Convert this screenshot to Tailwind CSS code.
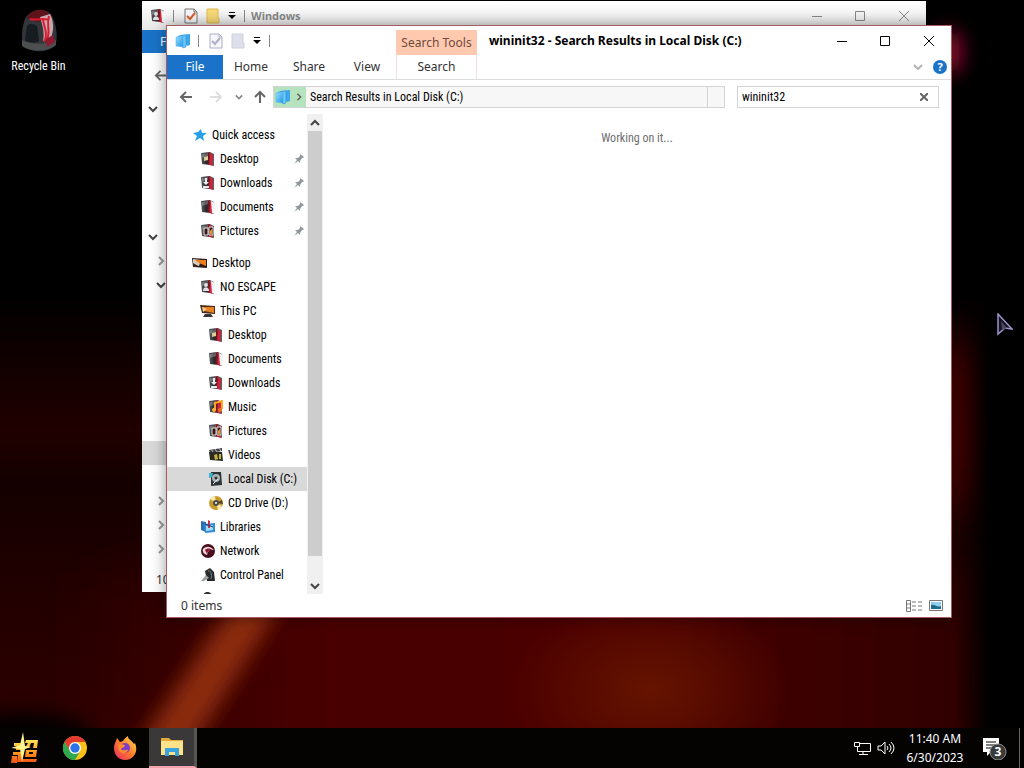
<!DOCTYPE html>
<html lang="en">
<head>
  <meta charset="utf-8">
  <meta name="viewport" content="width=device-width, initial-scale=1">
  <title>wininit32 - Search Results in Local Disk (C:)</title>
  <script src="https://cdn.jsdelivr.net/npm/@tailwindcss/browser@4"></script>
</head>
<body class="relative h-screen overflow-hidden bg-black font-['Roboto_Condensed','Lato',sans-serif] text-[12px] leading-4 text-black">

  <!-- icon sprite -->
  <svg class="absolute size-0" aria-hidden="true">
    <defs>
      <linearGradient id="gold" x1="0" y1="0" x2="0" y2="1"><stop offset="0" stop-color="#ffe45a"/><stop offset=".5" stop-color="#ff9d1e"/><stop offset="1" stop-color="#f2501a"/></linearGradient>
      <linearGradient id="fox" x1="1" y1="0" x2="0" y2="1"><stop offset="0" stop-color="#ffe14a"/><stop offset=".5" stop-color="#ff7a2b"/><stop offset="1" stop-color="#e8246e"/></linearGradient>
      <linearGradient id="blues" x1="0" y1="0" x2="1" y2="1"><stop offset="0" stop-color="#9be0ff"/><stop offset="1" stop-color="#2196e8"/></linearGradient>
      <linearGradient id="shell" x1="0" y1="0" x2="1" y2="0"><stop offset="0" stop-color="#5b5f63"/><stop offset=".6" stop-color="#25282b"/><stop offset="1" stop-color="#8f1420"/></linearGradient>
    </defs>
    <symbol id="box" viewBox="0 0 16 16">
      <path d="M1 2l9-1v13l-8-1z" fill="url(#shell)"/>
      <path d="M10 1l4 2v12l-4-1z" fill="#5a5d60"/>
      <path d="M9 2c3 3-1 6 1 12l3 1c-2-5 2-8-1-12z" fill="#d2233c"/>
      <path d="M2 3l6-1v3l-6 2z" fill="#fff" opacity=".25"/>
    </symbol>
    <symbol id="desk" viewBox="0 0 16 16"><use href="#box"/><path d="M4 6l4-1v4l-4 1z" fill="#d8cf9a"/></symbol>
    <symbol id="down" viewBox="0 0 16 16"><use href="#box"/><path d="M5 3h2v4h2L6 10 3 7h2zM3 11h6v2H3z" fill="#e6eef2"/></symbol>
    <symbol id="docs" viewBox="0 0 16 16"><use href="#box"/><path d="M11 2l4 2v11l-3-1z" fill="#f4f4f4"/></symbol>
    <symbol id="pics" viewBox="0 0 16 16"><use href="#box"/><path d="M4 5h4v7H4zM9 4h4v8H9z" fill="#33141a" stroke="#f0e6dc"/><path d="M10 8l2-2v5h-2z" fill="#e89a28"/></symbol>
    <symbol id="user" viewBox="0 0 16 16"><use href="#docs"/><circle cx="6" cy="6" r="2" fill="#dfe3e6"/><path d="M3 12c0-5 6-5 6 0z" fill="#dfe3e6"/></symbol>
    <symbol id="music" viewBox="0 0 16 16"><use href="#box"/><path d="M7 11V4l7-2v8" fill="none" stroke="#ffa51f" stroke-width="2"/><circle cx="6" cy="11" r="2" fill="#ffb52e"/><circle cx="12" cy="11" r="2" fill="#e8701c"/></symbol>
    <symbol id="video" viewBox="0 0 16 16"><path d="M1 3l13-2v3L2 6z" fill="#444"/><path d="M1 5h13l1 9-13-1z" fill="#292b24"/><path d="M3 2l2 3M7 2l2 3M11 1l2 3" stroke="#bbb"/><path d="M6 8l3-1 1 5-3 1zM11 7h2v5h-2z" fill="#c6b43c"/></symbol>
    <symbol id="monitor" viewBox="0 0 16 16"><path d="M0 3l15 1v9L1 12z" fill="#2a1a14"/><path d="M1 4l8 1-2 6-6-1z" fill="#d8cdbb"/><path d="M3 5l11 0v6L7 8z" fill="#ef7d1c"/><path d="M1 8l7 4H1z" fill="#3c2a22"/></symbol>
    <symbol id="pc" viewBox="0 0 16 16"><path d="M0 2l15 1v8L2 10z" fill="#4a2a18"/><path d="M2 4l12 0v6L4 8z" fill="#e8811f"/><path d="M2 4l5 2-4 3z" fill="#f9cf93"/><path d="M5 11h6l2 3H3z" fill="#343434"/></symbol>
    <symbol id="disk" viewBox="0 0 16 16"><path d="M3 1h10l1 13-11 1z" fill="#2e3436"/><circle cx="8" cy="7" r="4" fill="#aab4b8"/><circle cx="8" cy="7" r="1.5" fill="#2e3436"/><path d="M1 2h4l-1 4-3 1z" fill="#36b4d8"/><path d="M5 13l5-5" stroke="#eee"/></symbol>
    <symbol id="cd" viewBox="0 0 16 16"><circle cx="8" cy="8" r="7" fill="#c89a2c"/><path d="M8 8L2 4a7 7 0 0 1 5-3zM8 8l6 3a7 7 0 0 1-4 4z" fill="#f9ecae"/><path d="M8 8l6-3 1 4z" fill="#5a4a20"/><circle cx="8" cy="8" r="3" fill="#4d4a48"/><circle cx="8" cy="8" r="1" fill="#fff"/></symbol>
    <symbol id="lib" viewBox="0 0 16 16"><path d="M1 2l5 1v10l-5-2z" fill="#2b6fb4"/><path d="M4 5l11-1v9L5 14z" fill="#2f8ede"/><path d="M6 7l7-1v5l-7 1z" fill="#a7dbff"/><path d="M8 1l2 1v7H8z" fill="#c2334c"/><path d="M5 5l8 3" stroke="#253a66"/></symbol>
    <symbol id="net" viewBox="0 0 16 16"><circle cx="8" cy="8" r="7" fill="#48101e"/><path d="M3 6c4-4 8-2 11 1-4-1-6 0-7 5-3-1-5-3-4-6z" fill="#f0d8dc"/><path d="M5 7c2-2 5-2 7 0-4 0-4 2-5 4z" fill="#8e1730"/></symbol>
    <symbol id="panel" viewBox="0 0 16 16"><path d="M5 4l5-3 4 4 1 9H7z" fill="#26292a"/><path d="M8 4c3-1 4 3 3 8" stroke="#7c8284" fill="none"/><path d="M1 14l5-6 3 3-5 3z" fill="#9da1a2"/></symbol>
    <symbol id="star" viewBox="0 0 16 16"><path d="M9 2l1 4 5 0-4 3 1 5-4-3-5 3 2-5-4-3 5-1z" fill="#27a0ea"/></symbol>
    <symbol id="pin" viewBox="0 0 12 12"><path d="M7 1l4 3-1 1-1 0-2 3 0 2-2-2-4 3 3-4-2-2 3 0 2-2z" fill="#8d989d"/></symbol>
    <symbol id="stack" viewBox="0 0 16 16"><path d="M5 2l10-1v11l-3 1z" fill="#3ea6ea"/><path d="M3 3l8-1v12l-3 1z" fill="#6cc6f7" stroke="#2789cf" stroke-width=".5"/><path d="M1 4l7-1v11l-7-1z" fill="url(#blues)" stroke="#48aee8" stroke-width=".5"/></symbol>
    <symbol id="chev-d" viewBox="0 0 10 10"><path d="M1 3l4 4 4-4" fill="none" stroke="currentColor" stroke-width="2"/></symbol>
    <symbol id="chev-r" viewBox="0 0 10 10"><path d="M3 1l4 4-4 4" fill="none" stroke="currentColor" stroke-width="2"/></symbol>
    <symbol id="arrow-l" viewBox="0 0 14 14"><path d="M13 7H2M7 2L2 7l5 5" fill="none" stroke="currentColor" stroke-width="2"/></symbol>
    <symbol id="overflow" viewBox="0 0 8 8"><path d="M1 0h6v1H1zM0 3h8L4 7z" fill="currentColor"/></symbol>
    <symbol id="page" viewBox="0 0 14 16"><path d="M1 1h9l3 3v11H1z" fill="#f7f6fa" stroke="currentColor"/><path d="M10 1v3h3" fill="none" stroke="currentColor"/></symbol>
  </svg>

  <!-- wallpaper -->
  <svg class="absolute inset-0 size-full" viewBox="0 0 1024 768" preserveAspectRatio="none" aria-hidden="true">
    <defs>
      <linearGradient id="fade" x1="0" y1="0" x2="0" y2="1"><stop offset=".38" stop-color="#000"/><stop offset=".5" stop-color="#160000"/><stop offset=".56" stop-color="#200000"/><stop offset=".63" stop-color="#140000"/><stop offset=".8" stop-color="#240000"/><stop offset="1" stop-color="#300000"/></linearGradient>
      <linearGradient id="floor" x1="0" y1="0" x2="1" y2="0"><stop offset="0" stop-color="#480000" stop-opacity="0"/><stop offset=".28" stop-color="#480000"/><stop offset=".6" stop-color="#4c0500"/><stop offset="1" stop-color="#2e0000"/></linearGradient>
      <linearGradient id="edge" x1="0" y1="0" x2="1" y2="0"><stop offset="0" stop-color="#000" stop-opacity="0"/><stop offset=".5" stop-color="#000"/></linearGradient>
      <radialGradient id="ember"><stop offset="0" stop-color="#661400"/><stop offset="1" stop-color="#661400" stop-opacity="0"/></radialGradient>
      <filter id="soft" x="-100%" y="-100%" width="300%" height="300%"><feGaussianBlur stdDeviation="10"/></filter>
      <filter id="softer" x="-100%" y="-100%" width="300%" height="300%"><feGaussianBlur stdDeviation="24"/></filter>
    </defs>
    <rect width="1024" height="768" fill="url(#fade)"/>
    <rect x="60" y="570" width="920" height="260" fill="url(#floor)" filter="url(#softer)"/>
    <rect x="940" y="340" width="45" height="170" fill="#580000" filter="url(#softer)"/>
    <ellipse cx="650" cy="690" rx="140" ry="100" fill="url(#ember)"/>
    <path d="M135 750L235 600h50L190 750z" fill="#8a2a0c" filter="url(#soft)"/>
    <ellipse cx="20" cy="735" rx="70" ry="22" fill="#000" filter="url(#soft)"/>
    <rect x="955" width="69" height="768" fill="url(#edge)"/>
    <rect x="935" y="32" width="24" height="40" rx="8" fill="#c00840" filter="url(#soft)"/>
  </svg>

  <!-- desktop shortcut -->
  <a href="#" class="absolute left-0 top-[6px] flex w-[77px] flex-col items-center gap-1 text-white">
    <svg class="size-12" viewBox="0 0 48 48">
      <path d="M9 16C12 2 34 0 38 12c4 10 5 22 2 28-8 7-24 7-32 0-2-8-1-17 1-24z" fill="#32353a"/>
      <path d="M12 12C16 2 32 0 37 12L22 16z" fill="#5e1219"/>
      <path d="M25 11l10-3c4 8 4 16 1 24l-8 3c2-9-1-17-3-24z" fill="#c8a8ae"/>
      <path d="M15 13c8 2 14-2 19 1M28 12c0 9 6 14 1 24M34 10c-3 10 2 16-2 23" stroke="#d81c30" stroke-width="2" fill="none"/>
      <path d="M12 20c2-3 7-2 10 0l2 15c-4 3-10 2-14-1z" fill="#161c20"/>
      <path d="M7 34c9 5 25 5 34 0v5c-8 7-26 7-34 1z" fill="#4c4e50"/>
      <path d="M31 33l7-4 2 7-8 5z" fill="#8e1a30"/>
    </svg>
    <span>Recycle Bin</span>
  </a>

  <!-- background window -->
  <section class="absolute bottom-[176px] left-[142px] right-[98px] top-px flex flex-col overflow-hidden bg-white" aria-label="Windows">
    <header class="flex h-[29px] shrink-0 items-center bg-linear-to-b from-white to-[#e8e8e8] pl-2 text-[#888]">
      <svg class="size-4"><use href="#user"/></svg>
      <span class="ml-[7px] h-3 w-px bg-[#888]"></span>
      <svg class="ml-[10px] h-4 w-[14px] text-[#777]" viewBox="0 0 14 16"><use href="#page"/><path d="M3 8l3 3 5-6" fill="none" stroke="#d8602a" stroke-width="2"/></svg>
      <svg class="ml-2 h-4 w-[14px]" viewBox="0 0 14 16"><path d="M1 1h11v9h1v5H1z" fill="#f8d976" stroke="#dfbb50"/></svg>
      <svg class="ml-2 size-2 text-black"><use href="#overflow"/></svg>
      <span class="ml-2 h-3 w-px bg-[#888]"></span>
      <h2 class="ml-[6px] font-['Noto_Sans',sans-serif] text-[11px] font-bold">Windows</h2>
      <div class="ml-auto flex">
        <button class="grid w-[43px] place-items-center" aria-label="Minimize"><svg class="size-[10px]" viewBox="0 0 10 10"><path d="M0 5.500h10" stroke="#888"/></svg></button>
        <button class="grid w-[43px] place-items-center" aria-label="Maximize"><svg class="size-[10px]" viewBox="0 0 10 10"><path d="M.5.500h9v9h-9z" fill="none" stroke="#888"/></svg></button>
        <button class="grid w-[45px] place-items-center" aria-label="Close"><svg class="size-[10px]" viewBox="0 0 10 10"><path d="M0 0l10 10M10 0L0 10" stroke="#888"/></svg></button>
      </div>
    </header>
    <button class="h-[23px] w-14 shrink-0 bg-[#1a73c8] pl-[18px] text-left font-['Noto_Sans',sans-serif] text-[12px] text-white">File</button>
    <div class="flex h-[44px] shrink-0 items-center pl-3 text-[#666]"><svg class="size-[13px]"><use href="#arrow-l"/></svg></div>
    <ul class="flex-1 text-[#444]">
      <li class="flex h-6 items-center pl-[6px]"><svg class="size-[10px]"><use href="#chev-d"/></svg></li>
      <li class="mt-[104px] flex h-6 items-center pl-[6px]"><svg class="size-[10px]"><use href="#chev-d"/></svg></li>
      <li class="flex h-6 items-center pl-[14px] text-[#999]"><svg class="size-[10px]"><use href="#chev-r"/></svg></li>
      <li class="flex h-6 items-center pl-[14px]"><svg class="size-[10px]"><use href="#chev-d"/></svg></li>
      <li class="mt-36 h-6 w-[165px] bg-[#d9d9d9]"></li>
      <li class="mt-6 flex h-6 items-center pl-[14px] text-[#999]"><svg class="size-[10px]"><use href="#chev-r"/></svg></li>
      <li class="flex h-6 items-center pl-[14px] text-[#999]"><svg class="size-[10px]"><use href="#chev-r"/></svg></li>
      <li class="flex h-6 items-center pl-[14px] text-[#999]"><svg class="size-[10px]"><use href="#chev-r"/></svg></li>
    </ul>
    <footer class="flex h-6 shrink-0 items-center pl-[14px] font-['Noto_Sans',sans-serif] text-[12px] text-[#333]">105 items</footer>
  </section>

  <!-- search results window -->
  <main class="absolute bottom-[150px] left-[166px] right-[72px] top-[25px] flex flex-col border border-[#a85a62] bg-white shadow-[0_0_14px_rgba(0,0,0,0.4)]">
    <header class="flex h-[54px] shrink-0 border-b border-[#dcdcdc] font-['Noto_Sans',sans-serif] text-[12px] text-[#333]">
      <div class="flex w-[229px] shrink-0 flex-col">
        <div class="flex h-[29px] items-center pl-2">
          <svg class="size-4"><use href="#stack"/></svg>
          <span class="ml-[7px] h-3 w-px bg-[#888]"></span>
          <svg class="ml-[10px] h-4 w-[14px] text-[#a9b0c8]" viewBox="0 0 14 16"><use href="#page"/><path d="M3 8l3 3 5-6" fill="none" stroke="#a9b0c8" stroke-width="2"/></svg>
          <svg class="ml-2 h-4 w-[14px]" viewBox="0 0 14 16"><path d="M1 1h11v9h1v5H1z" fill="#dde0ea" stroke="#ced1dc"/></svg>
          <svg class="ml-2 size-2 text-black"><use href="#overflow"/></svg>
          <span class="ml-2 h-3 w-px bg-[#888]"></span>
        </div>
        <nav class="flex flex-1">
          <button class="w-14 bg-[#1a73c8] text-white">File</button>
          <button class="w-14">Home</button>
          <button class="w-[60px]">Share</button>
          <button class="w-14">View</button>
        </nav>
      </div>
      <div class="flex w-[81px] shrink-0 flex-col pt-1 text-center">
        <div class="h-[25px] bg-[#ffc9b0] leading-[25px] text-[#6e4a3c]">Search Tools</div>
        <button class="flex-1 border-x border-[#f0e4e0]">Search</button>
      </div>
      <div class="flex flex-1 flex-col">
        <div class="flex h-[29px] items-center justify-between pl-3">
          <h1 class="whitespace-nowrap text-[12px] font-bold text-black">wininit32 - Search Results in Local Disk (C:)</h1>
          <div class="flex">
            <button class="grid w-[43px] place-items-center" aria-label="Minimize"><svg class="size-[10px]" viewBox="0 0 10 10"><path d="M0 5.500h10" stroke="#000"/></svg></button>
            <button class="grid w-[43px] place-items-center" aria-label="Maximize"><svg class="size-[10px]" viewBox="0 0 10 10"><path d="M.5.500h9v9h-9z" fill="none" stroke="#000"/></svg></button>
            <button class="grid w-[45px] place-items-center" aria-label="Close"><svg class="size-[10px]" viewBox="0 0 10 10"><path d="M0 0l10 10M10 0L0 10" stroke="#000"/></svg></button>
          </div>
        </div>
        <div class="flex flex-1 items-center justify-end gap-[10px] pr-1">
          <button class="text-[#b4b4b4]" aria-label="Expand ribbon"><svg class="size-[10px]"><use href="#chev-d"/></svg></button>
          <button class="size-[14px] rounded-full bg-[#1a73c8] text-[11px] font-bold leading-[14px] text-white" aria-label="Help">?</button>
        </div>
      </div>
    </header>

    <div class="flex h-[34px] shrink-0 items-center pl-3 pr-3 text-[#666]">
      <button aria-label="Back"><svg class="size-[14px]"><use href="#arrow-l"/></svg></button>
      <button class="ml-4 text-[#dedede]" aria-label="Forward"><svg class="size-[14px]" viewBox="0 0 14 14"><path d="M1 7h11M7 2l5 5-5 5" fill="none" stroke="currentColor" stroke-width="2"/></svg></button>
      <button class="ml-3 text-[#888]" aria-label="Recent locations"><svg class="size-2"><use href="#chev-d"/></svg></button>
      <button class="ml-[10px]" aria-label="Up"><svg class="size-[14px]" viewBox="0 0 14 14"><path d="M7 13V2M2 7l5-5 5 5" fill="none" stroke="currentColor" stroke-width="2"/></svg></button>
      <div class="ml-[6px] flex h-[22px] flex-1 items-center border border-[#d4d4d4] bg-[#f7f7f7] text-black">
        <div class="flex h-full w-8 items-center gap-1 bg-[#b5e3bd] pl-px text-[#666]">
          <svg class="size-4"><use href="#stack"/></svg>
          <svg class="size-2"><use href="#chev-r"/></svg>
        </div>
        <span class="ml-1 whitespace-nowrap">Search Results in Local Disk (C:)</span>
        <button class="ml-auto h-full w-[17px] border-l border-[#d4d4d4]" aria-label="Refresh"></button>
      </div>
      <div class="ml-3 flex h-[22px] w-[202px] items-center border border-[#d4d4d4] bg-white px-1">
        <input type="text" value="wininit32" aria-label="Search" class="min-w-0 flex-1 text-black outline-none">
        <button class="px-[6px]" aria-label="Clear"><svg class="size-2" viewBox="0 0 8 8"><path d="M0 0l8 8M8 0L0 8" stroke="#666" stroke-width="2"/></svg></button>
      </div>
    </div>

    <div class="flex min-h-0 flex-1">
      <nav class="w-[140px] shrink-0 overflow-hidden whitespace-nowrap pt-[9px]" aria-label="Folders">
        <ul>
          <li><a href="#" class="flex h-6 items-center gap-1 pl-[25px]"><svg class="size-4"><use href="#star"/></svg>Quick access</a></li>
          <li><a href="#" class="flex h-6 items-center gap-1 pl-[33px] pr-[2px]"><svg class="size-4"><use href="#desk"/></svg>Desktop<svg class="ml-auto size-3"><use href="#pin"/></svg></a></li>
          <li><a href="#" class="flex h-6 items-center gap-1 pl-[33px] pr-[2px]"><svg class="size-4"><use href="#down"/></svg>Downloads<svg class="ml-auto size-3"><use href="#pin"/></svg></a></li>
          <li><a href="#" class="flex h-6 items-center gap-1 pl-[33px] pr-[2px]"><svg class="size-4"><use href="#docs"/></svg>Documents<svg class="ml-auto size-3"><use href="#pin"/></svg></a></li>
          <li><a href="#" class="flex h-6 items-center gap-1 pl-[33px] pr-[2px]"><svg class="size-4"><use href="#pics"/></svg>Pictures<svg class="ml-auto size-3"><use href="#pin"/></svg></a></li>
        </ul>
        <ul class="mt-2">
          <li><a href="#" class="flex h-6 items-center gap-1 pl-[25px]"><svg class="size-4"><use href="#monitor"/></svg>Desktop</a></li>
          <li><a href="#" class="flex h-6 items-center gap-1 pl-[33px]"><svg class="size-4"><use href="#user"/></svg>NO ESCAPE</a></li>
          <li><a href="#" class="flex h-6 items-center gap-1 pl-[33px]"><svg class="size-4"><use href="#pc"/></svg>This PC</a></li>
          <li><a href="#" class="flex h-6 items-center gap-1 pl-[41px]"><svg class="size-4"><use href="#desk"/></svg>Desktop</a></li>
          <li><a href="#" class="flex h-6 items-center gap-1 pl-[41px]"><svg class="size-4"><use href="#docs"/></svg>Documents</a></li>
          <li><a href="#" class="flex h-6 items-center gap-1 pl-[41px]"><svg class="size-4"><use href="#down"/></svg>Downloads</a></li>
          <li><a href="#" class="flex h-6 items-center gap-1 pl-[41px]"><svg class="size-4"><use href="#music"/></svg>Music</a></li>
          <li><a href="#" class="flex h-6 items-center gap-1 pl-[41px]"><svg class="size-4"><use href="#pics"/></svg>Pictures</a></li>
          <li><a href="#" class="flex h-6 items-center gap-1 pl-[41px]"><svg class="size-4"><use href="#video"/></svg>Videos</a></li>
          <li><a href="#" class="flex h-6 items-center gap-1 bg-[#d9d9d9] pl-[41px]" aria-current="true"><svg class="size-4"><use href="#disk"/></svg>Local Disk (C:)</a></li>
          <li><a href="#" class="flex h-6 items-center gap-1 pl-[41px]"><svg class="size-4"><use href="#cd"/></svg>CD Drive (D:)</a></li>
          <li><a href="#" class="flex h-6 items-center gap-1 pl-[33px]"><svg class="size-4"><use href="#lib"/></svg>Libraries</a></li>
          <li><a href="#" class="flex h-6 items-center gap-1 pl-[33px]"><svg class="size-4"><use href="#net"/></svg>Network</a></li>
          <li><a href="#" class="flex h-6 items-center gap-1 pl-[33px]"><svg class="size-4"><use href="#panel"/></svg>Control Panel</a></li>
          <li><a href="#" class="flex h-6 items-center pl-[33px]" aria-label="Recycle Bin"><svg class="size-4" viewBox="0 0 16 16"><path d="M3 4c2-4 7-4 9 0l1 11H3z" fill="#2e3032"/></svg></a></li>
        </ul>
      </nav>
      <div class="flex w-4 shrink-0 flex-col bg-[#f0f0f0] text-[#444]">
        <button class="grid h-[17px] place-items-center" aria-label="Scroll up"><svg class="size-[10px]" viewBox="0 0 10 10"><path d="M1 7l4-4 4 4" fill="none" stroke="currentColor" stroke-width="2"/></svg></button>
        <div class="mx-px flex-1 bg-[#cdcdcd]"></div>
        <button class="mt-[21px] grid h-[17px] place-items-center" aria-label="Scroll down"><svg class="size-[10px]"><use href="#chev-d"/></svg></button>
      </div>
      <p class="flex-1 pt-4 text-center text-[#6d6d6d]">Working on it...</p>
    </div>

    <footer class="flex h-[23px] shrink-0 items-center pl-[14px] pr-2 font-['Noto_Sans',sans-serif] text-[12px] text-[#333]">
      0 items
      <button class="ml-auto" aria-label="Details view"><svg class="h-3 w-4" viewBox="0 0 16 12"><path d="M.5.500h4v11h-4zM.5 4h4M.5 8h4M6 2h4M12 2h4M6 6h4M12 6h4M6 10h4M12 10h4" fill="none" stroke="#777"/></svg></button>
      <button class="ml-[7px]" aria-label="Thumbnail view"><svg class="h-3 w-[14px]" viewBox="0 0 14 12"><path d="M.5.500h13v10H.5z" fill="#fff" stroke="#777"/><path d="M2 2h10v7H2z" fill="#8fd0ea"/><path d="M2 5c4-1 6 3 10 1v3H2z" fill="#1d6a8c"/></svg></button>
    </footer>
  </main>

  <!-- pointer -->
  <svg class="absolute left-[997px] top-[313px] h-[23px] w-4" viewBox="0 0 16 23"><path d="M1 1l14 15-7-1-7 6z" fill="#15131f" stroke="#9a94cc" stroke-width="1.500"/><path d="M4 8l6 7-5 2z" fill="#4b4860"/></svg>

  <!-- taskbar -->
  <footer class="absolute inset-x-0 bottom-0 flex h-10 items-center bg-[#050202] font-['Noto_Sans',sans-serif] text-[12px] text-white">
    <button class="grid h-full w-[50px] place-items-center" aria-label="Start">
      <svg class="h-8 w-7" viewBox="0 0 28 32">
        <path d="M3 11h9v3H3zM5 15h8v3H5zM2 20h10v3H2zM1 24h5v7H0zM7 22h4v8H6zM15 8h12l-1 8h-4l1-5h-3l-2 5h-4l3-5h-3zM15 18h11l-1 7H14zM9 27h17l-1 3H8z" fill="url(#gold)"/>
        <path d="M18 20h4v2h-4z" fill="#050202"/>
        <path d="M12 0l2 14 6 1-6 2-3 13-2-13-9-1 9-3z" fill="#fff38c"/>
      </svg>
    </button>
    <button class="grid h-full w-[50px] place-items-center" aria-label="Chrome">
      <svg class="size-6" viewBox="0 0 24 24">
        <circle cx="12" cy="12" r="12" fill="#fbc116"/>
        <path d="M12 6h10.400A12 12 0 0 0 1.600 6l5.200 9z" fill="#e33b2e"/>
        <path d="M1.600 6l5.200 9L12 18l5.200-3L12 24A12 12 0 0 1 1.600 6z" fill="#2da94f"/>
        <circle cx="12" cy="12" r="6" fill="#fff"/><circle cx="12" cy="12" r="4.700" fill="#2a74e8"/>
      </svg>
    </button>
    <button class="grid h-full w-[49px] place-items-center" aria-label="Firefox">
      <svg class="size-6" viewBox="0 0 24 24">
        <path d="M3 5l1-3 3 4 3-1c1-2 3-4 5-5 0 4 4 4 6 8l1-1c4 9-2 17-10 17C3 24-2 14 3 5z" fill="url(#fox)"/>
        <circle cx="12" cy="12" r="5" fill="#7a3bd0"/>
        <path d="M5 9c3-2 5 0 7 0 0 3-3 2-4 4 2 3 5 0 7 1-2 5-10 5-10-5z" fill="#ff8a2a"/>
      </svg>
    </button>
    <button class="grid h-full w-[48px] place-items-center border-b-2 border-r-[3px] border-b-[#f5a3aa] border-r-[#555] bg-[#3a3838]" aria-label="File Explorer">
      <svg class="h-5 w-6" viewBox="0 0 24 20"><path d="M1 1h8l2 2h12v4H1z" fill="#e3a93a"/><path d="M1 4h22v14H1z" fill="#fde28a"/><path d="M5 11h14v8h-4v-4H9v4H5z" fill="#38a3dc"/></svg>
    </button>
    <div class="ml-auto flex h-full items-center">
      <button aria-label="Network"><svg class="h-4 w-[17px]" viewBox="0 0 17 16"><path d="M5 3.500h11.500v8H3.500V7M.5 2.500h5v4h-5zM9 12v2.500M5 14.500h9" fill="none" stroke="#fff"/></svg></button>
      <button class="ml-[6px]" aria-label="Volume"><svg class="h-4 w-[18px]" viewBox="0 0 18 16"><path d="M1 6h3l4-4v12l-4-4H1zM10 6q2 2 0 4M12 4q4 4 0 8M14 2q6 6 0 12" fill="none" stroke="#fff"/></svg></button>
      <button class="ml-2 w-[64px] text-center leading-[19px]">11:40 AM<br>6/30/2023</button>
      <button class="ml-4 w-6" aria-label="Notifications, 3 new">
        <svg class="size-6" viewBox="0 0 24 24"><path d="M0 2h16v14h-8l-4 4v-4H0z" fill="#fff"/><path d="M3 6h10M3 9h10M3 12h7" stroke="#000"/><circle cx="15" cy="16" r="8" fill="#3a3a3a" stroke="#888"/><text x="15" y="20" fill="#fff" font-size="12" font-weight="bold" text-anchor="middle">3</text></svg>
      </button>
      <span class="ml-3 mr-1 h-full w-px bg-[#666]"></span>
    </div>
  </footer>
</body>
</html>
